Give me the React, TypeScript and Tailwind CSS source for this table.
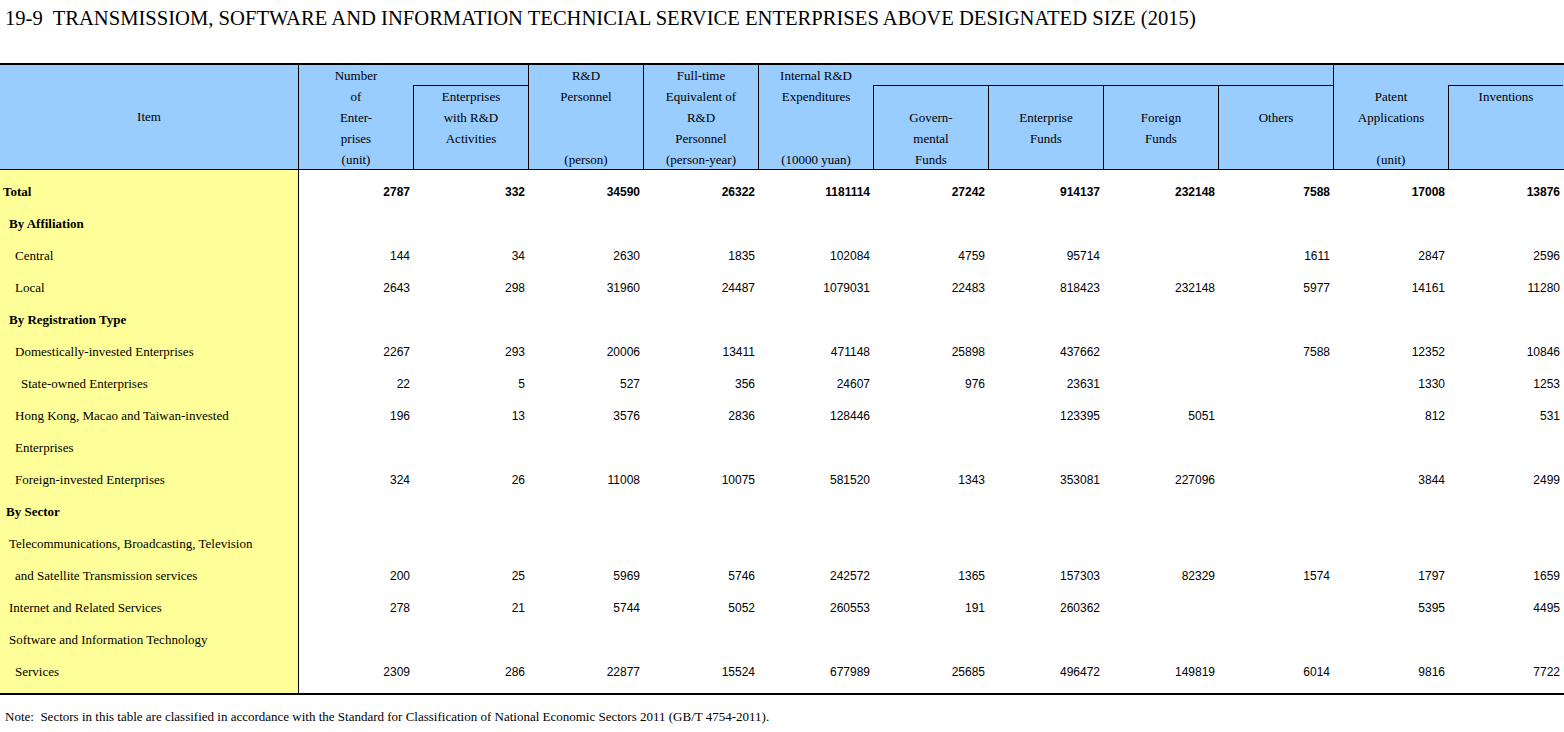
import React from "react";

type Row = { label: string; pl: string; bold?: boolean; vals?: (number | string)[] };

const rows: Row[] = [
  { label: "Total", pl: "pl-[3px]", bold: true, vals: [2787, 332, 34590, 26322, 1181114, 27242, 914137, 232148, 7588, 17008, 13876] },
  { label: "By Affiliation", pl: "pl-[9px]", bold: true },
  { label: "Central", pl: "pl-[15px]", vals: [144, 34, 2630, 1835, 102084, 4759, 95714, "", 1611, 2847, 2596] },
  { label: "Local", pl: "pl-[15px]", vals: [2643, 298, 31960, 24487, 1079031, 22483, 818423, 232148, 5977, 14161, 11280] },
  { label: "By Registration Type", pl: "pl-[9px]", bold: true },
  { label: "Domestically-invested Enterprises", pl: "pl-[15px]", vals: [2267, 293, 20006, 13411, 471148, 25898, 437662, "", 7588, 12352, 10846] },
  { label: "State-owned Enterprises", pl: "pl-[21px]", vals: [22, 5, 527, 356, 24607, 976, 23631, "", "", 1330, 1253] },
  { label: "Hong Kong, Macao and Taiwan-invested", pl: "pl-[15px]", vals: [196, 13, 3576, 2836, 128446, "", 123395, 5051, "", 812, 531] },
  { label: "Enterprises", pl: "pl-[15px]" },
  { label: "Foreign-invested Enterprises", pl: "pl-[15px]", vals: [324, 26, 11008, 10075, 581520, 1343, 353081, 227096, "", 3844, 2499] },
  { label: "By Sector", pl: "pl-[6px]", bold: true },
  { label: "Telecommunications, Broadcasting, Television", pl: "pl-[9px]" },
  { label: "and Satellite Transmission services", pl: "pl-[15px]", vals: [200, 25, 5969, 5746, 242572, 1365, 157303, 82329, 1574, 1797, 1659] },
  { label: "Internet and Related Services", pl: "pl-[9px]", vals: [278, 21, 5744, 5052, 260553, 191, 260362, "", "", 5395, 4495] },
  { label: "Software and Information Technology", pl: "pl-[9px]" },
  { label: "Services", pl: "pl-[15px]", vals: [2309, 286, 22877, 15524, 677989, 25685, 496472, 149819, 6014, 9816, 7722] },
];

function Lines({ lines }: { lines: string[] }) {
  return (
    <div className="flex flex-col">
      {lines.map((l, i) => (
        <div key={i} className="h-[21px] leading-[21px] text-center whitespace-nowrap">
          {l}
        </div>
      ))}
    </div>
  );
}

export default function App() {
  const serif = "font-['Liberation_Serif','Times_New_Roman',serif]";
  return (
    <div className={`w-[1564px] bg-white text-black ${serif}`}>
      <div className="h-[63px] pl-[5px] pt-[5px] text-[20.6px] leading-[26px] whitespace-pre">
        {"19-9  TRANSMISSIOM, SOFTWARE AND INFORMATION TECHNICIAL SERVICE ENTERPRISES ABOVE DESIGNATED SIZE (2015)"}
      </div>
      <div className="border-t-[2px] border-black">
        <div className="grid grid-cols-[298px_repeat(11,115px)] grid-rows-[20px_84px] bg-[#99CCFF] text-[13px]">
          <div className="col-start-1 row-start-1 row-span-2 flex items-center justify-center">Item</div>
          <div className="col-start-2 row-start-1 row-span-2 border-l border-black">
            <Lines lines={["Number", "of", "Enter-", "prises", "(unit)"]} />
          </div>
          <div className="col-start-3 row-start-2 border-l border-t border-black">
            <Lines lines={["Enterprises", "with R&D", "Activities"]} />
          </div>
          <div className="col-start-4 row-start-1 row-span-2 border-l border-black">
            <Lines lines={["R&D", "Personnel", "", "", "(person)"]} />
          </div>
          <div className="col-start-5 row-start-1 row-span-2 border-l border-black">
            <Lines lines={["Full-time", "Equivalent of", "R&D", "Personnel", "(person-year)"]} />
          </div>
          <div className="col-start-6 row-start-1 row-span-2 border-l border-black">
            <Lines lines={["Internal R&D", "Expenditures", "", "", "(10000 yuan)"]} />
          </div>
          <div className="col-start-7 row-start-2 border-l border-t border-black">
            <Lines lines={["", "Govern-", "mental", "Funds"]} />
          </div>
          <div className="col-start-8 row-start-2 border-l border-t border-black">
            <Lines lines={["", "Enterprise", "Funds"]} />
          </div>
          <div className="col-start-9 row-start-2 border-l border-t border-black">
            <Lines lines={["", "Foreign", "Funds"]} />
          </div>
          <div className="col-start-10 row-start-2 border-l border-t border-black">
            <Lines lines={["", "Others"]} />
          </div>
          <div className="col-start-11 row-start-1 row-span-2 border-l border-black">
            <Lines lines={["", "Patent", "Applications", "", "(unit)"]} />
          </div>
          <div className="col-start-12 row-start-2 border-l border-t border-black">
            <Lines lines={["Inventions"]} />
          </div>
        </div>
        <div className="flex border-t border-b-[2px] border-black">
          <div className="w-[298px] shrink-0 bg-[#FFFF99] pt-[6px] pb-[5px] text-[13px]">
            {rows.map((r, i) => (
              <div key={i} className={`h-[32px] flex items-center whitespace-nowrap ${r.pl} ${r.bold ? "font-bold" : ""}`}>
                {r.label}
              </div>
            ))}
          </div>
          <div className="flex-1 border-l border-black pt-[6px] pb-[5px] font-['Liberation_Sans',Arial,sans-serif] text-[12px]">
            {rows.map((r, i) => (
              <div key={i} className={`h-[32px] grid grid-cols-[repeat(11,115px)] items-center ${r.bold ? "font-bold" : ""}`}>
                {(r.vals ?? Array(11).fill("")).map((v, j) => (
                  <div key={j} className="text-right pr-[4px]">
                    {v}
                  </div>
                ))}
              </div>
            ))}
          </div>
        </div>
      </div>
      <div className="pl-[5px] pt-[14px] text-[13px] leading-[16px] whitespace-pre">
        {"Note:  Sectors in this table are classified in accordance with the Standard for Classification of National Economic Sectors 2011 (GB/T 4754-2011)."}
      </div>
    </div>
  );
}
